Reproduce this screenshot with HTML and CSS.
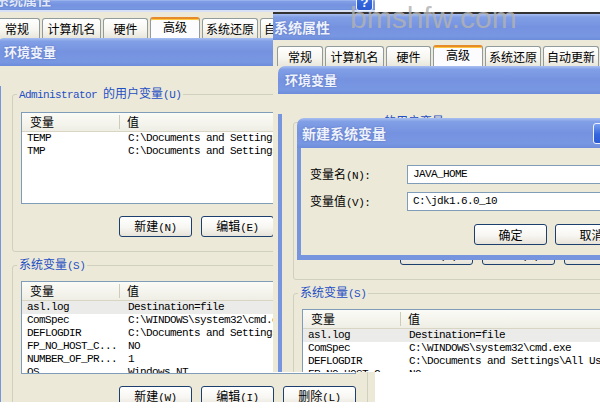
FILE: index.html
```html
<!DOCTYPE html>
<html lang="zh-CN">
<head>
<meta charset="utf-8">
<title>环境变量</title>
<link rel="stylesheet" href="styles.css">
</head>
<body>
<div class="desk">

  <section class="win win-back">
    <header class="tbar tbar-back">
      <span class="ttl">系统属性</span>
      <span class="tbtn tbtn-help">?</span>
    </header>
    <nav class="tabs tabs-back">
      <span class="tab">常规</span>
      <span class="tab">计算机名</span>
      <span class="tab">硬件</span>
      <span class="tab on">高级</span>
      <span class="tab">系统还原</span>
      <span class="tab">自动更新</span>
    </nav>
    <div class="env env-back">
      <header class="tbar env-bar"><span>环境变量</span></header>
      <div class="env-body">
        <fieldset class="grp grp-user">
          <legend><span class="m">Administrator </span>的用户变量<span class="mx">(U)</span></legend>
          <div class="list list-user">
            <div class="lh"><span class="c1">变量</span><span class="c2">值</span></div>
            <div class="lr"><span class="c1">TEMP</span><span class="c2">C:\Documents and Settings\Administrator\Local Settings\Temp</span></div>
            <div class="lr"><span class="c1">TMP</span><span class="c2">C:\Documents and Settings\Administrator\Local Settings\Temp</span></div>
          </div>
          <div class="btns">
            <button class="btn">新建<span class="mx">(N)</span></button>
            <button class="btn">编辑<span class="mx">(E)</span></button>
            <button class="btn">删除<span class="mx">(D)</span></button>
          </div>
        </fieldset>
        <fieldset class="grp grp-sys">
          <legend>系统变量<span class="mx">(S)</span></legend>
          <div class="list list-sys">
            <div class="lh"><span class="c1">变量</span><span class="c2">值</span></div>
            <div class="lr sel"><span class="c1">asl.log</span><span class="c2">Destination=file</span></div>
            <div class="lr"><span class="c1">ComSpec</span><span class="c2">C:\WINDOWS\system32\cmd.exe</span></div>
            <div class="lr"><span class="c1">DEFLOGDIR</span><span class="c2">C:\Documents and Settings\All Users\Application Data</span></div>
            <div class="lr"><span class="c1">FP_NO_HOST_C...</span><span class="c2">NO</span></div>
            <div class="lr"><span class="c1">NUMBER_OF_PR...</span><span class="c2">1</span></div>
            <div class="lr"><span class="c1">OS</span><span class="c2">Windows_NT</span></div>
          </div>
          <div class="btns">
            <button class="btn">新建<span class="mx">(W)</span></button>
            <button class="btn">编辑<span class="mx">(I)</span></button>
            <button class="btn">删除<span class="mx">(L)</span></button>
          </div>
        </fieldset>
      </div>
    </div>
  </section>

  <section class="win win-front">
    <header class="tbar tbar-front"><span class="ttl">系统属性</span></header>
    <nav class="tabs tabs-front">
      <span class="tab">常规</span>
      <span class="tab">计算机名</span>
      <span class="tab">硬件</span>
      <span class="tab on">高级</span>
      <span class="tab">系统还原</span>
      <span class="tab">自动更新</span>
    </nav>
    <div class="env env-front">
      <header class="tbar env-bar"><span>环境变量</span></header>
      <div class="env-body">
        <fieldset class="grp grp-user">
          <legend><span class="m">Administrator </span>的用户变量<span class="mx">(U)</span></legend>
          <div class="list list-user">
            <div class="lh"><span class="c1">变量</span><span class="c2">值</span></div>
            <div class="lr"><span class="c1">TEMP</span><span class="c2">C:\Documents and Settings\Administrator\Local Settings\Temp</span></div>
            <div class="lr"><span class="c1">TMP</span><span class="c2">C:\Documents and Settings\Administrator\Local Settings\Temp</span></div>
          </div>
          <div class="btns">
            <button class="btn">新建<span class="mx">(N)</span></button>
            <button class="btn">编辑<span class="mx">(E)</span></button>
            <button class="btn">删除<span class="mx">(D)</span></button>
          </div>
        </fieldset>
        <fieldset class="grp grp-sys">
          <legend>系统变量<span class="mx">(S)</span></legend>
          <div class="list list-sys">
            <div class="lh"><span class="c1">变量</span><span class="c2">值</span></div>
            <div class="lr sel"><span class="c1">asl.log</span><span class="c2">Destination=file</span></div>
            <div class="lr"><span class="c1">ComSpec</span><span class="c2">C:\WINDOWS\system32\cmd.exe</span></div>
            <div class="lr"><span class="c1">DEFLOGDIR</span><span class="c2">C:\Documents and Settings\All Users\Application Data</span></div>
            <div class="lr"><span class="c1">FP_NO_HOST_C...</span><span class="c2">NO</span></div>
            <div class="lr"><span class="c1">NUMBER_OF_PR...</span><span class="c2">1</span></div>
          </div>
        </fieldset>
      </div>
    </div>

    <div class="newdlg">
      <header class="tbar nd-bar">
        <span>新建系统变量</span>
        <span class="tbtn tbtn-close">×</span>
      </header>
      <div class="nd-body">
        <div class="nd-row">
          <span class="nd-lbl">变量名<span class="mx">(N):</span></span>
          <span class="nd-in m">JAVA_HOME</span>
        </div>
        <div class="nd-row">
          <span class="nd-lbl">变量值<span class="mx">(V):</span></span>
          <span class="nd-in m">C:\jdk1.6.0_10</span>
        </div>
        <div class="nd-btns">
          <button class="btn">确定</button>
          <button class="btn">取消</button>
        </div>
      </div>
    </div>
  </section>

  <div class="watermark">bmshfw.com</div>
</div>
</body>
</html>
```

FILE: styles.css
```css
* { box-sizing: border-box; margin: 0; padding: 0; }
html, body { width: 600px; height: 419px; overflow: hidden; background: #fff; }
body {
  font-family: "Noto Sans CJK SC", "Noto Sans", sans-serif;
  font-size: 12px;
  line-height: 14px;
  color: #000;
}
.desk { position: relative; width: 600px; height: 419px; background: #fff; overflow: hidden; }

.m { font-family: "Liberation Mono", "Noto Sans CJK SC", monospace; font-size: 11px; letter-spacing: -0.6px; }
.mx { font-family: "Liberation Mono", "Noto Sans CJK SC", monospace; font-size: 11px; letter-spacing: -0.5px; }

/* windows on the canvas */
.win { position: absolute; overflow: hidden; background: #ece9d8; }
.win-back { left: 0; top: 0; width: 375px; height: 402px; }
.win-front { left: 273px; top: 12px; width: 327px; height: 360px; border-top: 2px solid #333; }

/* title bars */
.tbar {
  display: flex;
  align-items: center;
  color: #eef2fc;
  font-weight: 700;
  text-shadow: 0 0 2px rgba(40, 60, 140, .45);
  background: linear-gradient(180deg, #a9bff1 0%, #819fe6 12%, #7592e0 50%, #7897e2 86%, #6c8bd9 100%);
  white-space: nowrap;
}
.tbar-back { height: 12px; border-bottom: 2px solid #d7e0f5; align-items: flex-start; }
.tbar-back .ttl { font-size: 14px; line-height: 14px; margin: -8px 0 0 -5px; color: #dfe7fa; }
.tbar-front { height: 26px; padding-left: 1px; font-size: 14px; }

.tbtn {
  display: flex;
  align-items: center;
  justify-content: center;
  width: 21px;
  height: 21px;
  border: 1px solid #eef2fb;
  border-radius: 3px;
  background: linear-gradient(180deg, #7aa0f0, #3566dc 55%, #2c5bd2);
  color: #fff;
  font-family: "Liberation Sans", sans-serif;
  font-size: 13px;
  font-weight: 700;
  text-shadow: none;
}
.tbtn-help { width: 17px; height: 20px; margin: -9px 2px 0 auto; padding-top: 4px; }
.tbtn-close { margin: 0 27px 0 auto; }

/* tabs */
.tabs { display: flex; align-items: flex-end; gap: 2px; height: 21px; margin-top: 5px; }
.tabs-back { margin-left: -6px; }
.tabs-front { margin-left: 4px; }
.tab {
  flex: none;
  display: flex;
  align-items: center;
  justify-content: center;
  height: 20px;
  border: 1px solid #919b9c;
  border-bottom: 0;
  border-radius: 3px 3px 0 0;
  background: linear-gradient(180deg, #fff 0%, #f7f6f1 55%, #e9e7dc 100%);
  white-space: nowrap;
}
.tab:nth-child(1) { width: 46px; }
.tab:nth-child(2) { width: 59px; }
.tab:nth-child(3) { width: 45px; }
.tab:nth-child(4) { width: 50px; }
.tab:nth-child(5) { width: 56px; }
.tab:nth-child(6) { width: 56px; }
.tab.on {
  height: 21px;
  background: #fcfcfe;
  border-top: 2px solid #e68b2c;
  box-shadow: inset 0 1px 0 #ffc73c;
  padding-bottom: 3px;
}

/* environment-variables dialog */
.env { width: 385px; flex: none; }
.env-back { margin-left: -3px; }
.env-front { margin-left: 5px; }
.env-bar { height: 28px; border-radius: 7px 7px 0 0; padding-left: 7px; font-size: 13px; }
.env-body { background: #ece9d8; border-left: 4px solid #7795df; padding: 0 0 20px 11px; }

.grp {
  width: 356px;
  border: 1px solid #d0d0bf;
  border-radius: 3px;
  padding: 0 0 14px 8px;
  min-inline-size: 0;
}
.grp legend {
  margin-left: -4px;
  padding: 0 2px;
  color: #1f4fc4;
  line-height: 14px;
  white-space: nowrap;
}
.grp-user { margin-top: 20px; }
.grp-sys { margin-top: 5px; }

.list {
  width: 335px;
  background: #fff;
  border: 1px solid #7f9db9;
  overflow: hidden;
}
.list-user { height: 92px; margin-top: 10px; }
.list-sys { height: 93px; margin-top: 8px; }

.lh {
  display: flex;
  align-items: center;
  height: 19px;
  background: linear-gradient(180deg, #fbfbf7, #efeee5);
  border-bottom: 1px solid #d9d5c4;
}
.lh .c1 { width: 98px; padding-left: 8px; border-right: 1px solid #cfcbb9; line-height: 14px; }
.lh .c2 { padding-left: 7px; }

.lr {
  display: flex;
  height: 13px;
  line-height: 13px;
  white-space: nowrap;
  font-family: "Liberation Mono", monospace;
  font-size: 11px;
  letter-spacing: -0.6px;
}
.lr .c1 { width: 106px; flex: none; padding-left: 5px; }
.lr.sel { background: #ebebea; }

.btns { display: flex; justify-content: flex-end; gap: 9px; width: 335px; margin-top: 12px; }
.btn {
  flex: none;
  width: 73px;
  height: 21px;
  border: 1px solid #1d3f6e;
  border-radius: 3px;
  background: linear-gradient(180deg, #ffffff 0%, #f7f6f2 55%, #e6e3d8 100%);
  font-family: "Noto Sans CJK SC", sans-serif;
  font-size: 12px;
  line-height: 14px;
  color: #000;
}

/* new system variable dialog */
.newdlg { position: absolute; left: 24px; top: 104px; width: 344px; }
.nd-bar { height: 30px; border-radius: 7px 7px 0 0; padding-left: 5px; font-size: 14px; }
.nd-body {
  background: #ece9d8;
  border: 4px solid #7795df;
  border-top: 0;
  border-bottom-width: 5px;
  padding: 17px 9px 10px 9px;
}
.nd-row { display: flex; align-items: center; height: 19px; }
.nd-row + .nd-row { margin-top: 8px; }
.nd-lbl { width: 97px; flex: none; white-space: nowrap; }
.nd-in {
  width: 221px;
  height: 19px;
  border: 1px solid #7f9db9;
  background: #fff;
  padding-left: 5px;
  line-height: 17px;
  white-space: nowrap;
}
.nd-btns { display: flex; justify-content: flex-end; gap: 8px; margin-top: 13px; }

.watermark {
  position: absolute;
  left: 350px;
  top: 3px;
  font-family: "Liberation Sans", sans-serif;
  font-size: 30px;
  line-height: 1;
  color: rgba(178, 178, 178, .82);
  white-space: nowrap;
}
```
